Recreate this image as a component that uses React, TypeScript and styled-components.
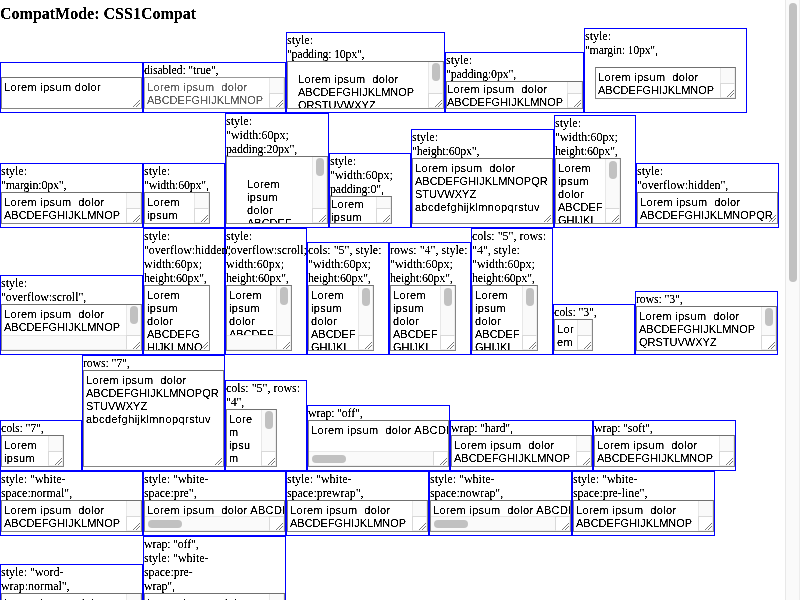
import React from 'react';
import styled, { createGlobalStyle, css } from 'styled-components';

const Global = createGlobalStyle`
  html, body { margin: 0; padding: 0; background: #fff; overflow: hidden; }
  * { box-sizing: border-box; }
`;

const Window = styled.div`
  display: flex;
  width: 800px;
  height: 600px;
  overflow: hidden;
  background: #fff;
  color: #000;
`;

const Page = styled.main`
  flex: 1;
  min-width: 0;
  font: 12px/14px 'Liberation Serif', 'Times New Roman', serif;
`;

const Title = styled.h1`
  margin: 0;
  height: 28px;
  padding-top: 5px;
  font-size: 16px;
  line-height: 18px;
  font-weight: bold;
  white-space: pre;
  filter: url(#crisp);
`;

const Row = styled.div`
  display: flex;
  align-items: flex-end;
`;

const Cell = styled.section`
  flex: none;
  min-width: 82px;
  border: 1px solid #00f;
  padding-bottom: 3px;
`;

const Label = styled.div`
  width: 0;
  min-height: 14px;
  white-space: pre;
`;

const LabelLine = styled.div<{ $track: number }>`
  width: max-content;
  height: 14px;
  letter-spacing: ${(p) => p.$track}px;
  filter: url(#crisp);
`;

const Field = styled.div<{ $w: number; $h: number; $margin: number; $disabled: boolean }>`
  display: flex;
  flex-direction: column;
  position: relative;
  width: ${(p) => p.$w}px;
  height: ${(p) => p.$h}px;
  margin: ${(p) => p.$margin}px;
  border: 1px solid ${(p) => (p.$disabled ? '#aaa' : '#858585')};
  border-top-color: ${(p) => (p.$disabled ? '#999' : '#707070')};
  background: #fff;
  color: ${(p) => (p.$disabled ? '#606060' : '#000')};
  overflow: hidden;
`;

const Upper = styled.div`
  display: flex;
  flex: 1;
  min-height: 0;
`;

const Lower = styled.div`
  display: flex;
  flex: none;
  height: 15px;
`;

const Content = styled.div<{ $pad: number }>`
  flex: 1;
  min-width: 0;
  padding: ${(p) => p.$pad + 1}px ${(p) => p.$pad}px 0;
  font: 11px/13px 'Liberation Sans', Arial, sans-serif;
  white-space: pre;
  overflow: hidden;
`;

const ContentLine = styled.div<{ $track: number }>`
  width: max-content;
  height: 13px;
  letter-spacing: ${(p) => p.$track}px;
  filter: url(#crisp);
`;

const SideBar = styled.div`
  display: flex;
  flex-direction: column;
  flex: none;
  width: 15px;
`;

const track = css`
  flex: 1;
  background: #fafafa;
`;

const VTrack = styled.div<{ $start: number }>`
  ${track}
  border-left: 1px solid #e8e8e8;
  border-right: 1px solid #ededed;
  padding: ${(p) => p.$start}px 0 0 3px;
`;

const HTrack = styled.div`
  ${track}
  border-top: 1px solid #e8e8e8;
  border-bottom: 1px solid #ededed;
  padding: 3px 0 0 3px;
`;

const Thumb = styled.div<{ $w: number; $h: number }>`
  width: ${(p) => p.$w}px;
  height: ${(p) => p.$h}px;
  border-radius: 4px;
  background: #c1c1c1;
`;

const Corner = styled.div`
  flex: none;
  width: 15px;
  height: 15px;
  border: 1px solid #d9d9d9;
  border-right-color: #f0f0f0;
  border-bottom-color: #f0f0f0;
  background: #fff;
`;

const Grip = styled.svg`
  position: absolute;
  right: 0;
  bottom: 0;
`;

const FilterDefs = styled.svg`
  position: absolute;
`;

type Bar = 'none' | 'v' | 'h' | 'both';

interface Spec {
  label: string[];
  text?: string[];
  w?: number;
  h?: number;
  pad?: number;
  margin?: number;
  bar?: Bar;
  thumb?: number;
  disabled?: boolean;
}

const LOREM = 'Lorem ipsum  dolor';
const WRAPPED = [LOREM, 'ABCDEFGHIJKLMNOP', 'QRSTUVWXYZ'];
const OPEN = [LOREM, 'ABCDEFGHIJKLMNOPQR', 'STUVWXYZ', 'abcdefghijklmnopqrstuv'];
const NARROW = ['Lorem', 'ipsum', 'dolor', 'ABCDEF', 'GHIJKL'];
const UNBROKEN = [LOREM + ' ABCDEFGHIJKLMNOP'];

const small = { w: 66, h: 66, text: NARROW, thumb: 2 };

const rows: Spec[][] = [
  [
    { label: [''], text: ['Lorem ipsum dolor'], bar: 'none' },
    { label: ['disabled: "true",'], disabled: true },
    { label: ['style:', '"padding: 10px",'], w: 157, h: 48, pad: 10, thumb: 1 },
    { label: ['style:', '"padding:0px",'], w: 137, h: 28, pad: 0 },
    { label: ['style:', '"margin: 10px",'], margin: 10 },
  ],
  [
    { label: ['style:', '"margin:0px",'] },
    { label: ['style:', '"width:60px",'], w: 66, text: NARROW.slice(0, 2) },
    { label: ['style:', '"width:60px;', 'padding:20px",'], w: 102, h: 68, pad: 20, text: NARROW, thumb: 1 },
    { label: ['style:', '"width:60px;', 'padding:0",'], w: 62, h: 28, pad: 0, text: NARROW.slice(0, 2) },
    { label: ['style:', '"height:60px",'], h: 66, text: OPEN, bar: 'none' },
    { label: ['style:', '"width:60px;', 'height:60px",'], ...small },
    { label: ['style:', '"overflow:hidden",'], text: OPEN.slice(0, 2), bar: 'none' },
  ],
  [
    { label: ['style:', '"overflow:scroll",'], h: 47, bar: 'both', thumb: 1, text: WRAPPED.slice(0, 2) },
    {
      label: ['style:', '"overflow:hidden;', 'width:60px;', 'height:60px",'],
      w: 66, h: 66, text: ['Lorem', 'ipsum', 'dolor', 'ABCDEFG', 'HIJKLMNO'], bar: 'none',
    },
    { label: ['style:', '"overflow:scroll;', 'width:60px;', 'height:60px",'], ...small, bar: 'both', thumb: 1 },
    { label: ['cols: "5", style:', '"width:60px;', 'height:60px",'], ...small },
    { label: ['rows: "4", style:', '"width:60px;', 'height:60px",'], ...small },
    { label: ['cols: "5", rows:', '"4", style:', '"width:60px;', 'height:60px",'], ...small },
    { label: ['cols: "3",'], w: 39, text: ['Lor', 'em'] },
    { label: ['rows: "3",'], h: 45, thumb: 1 },
  ],
  [
    { label: ['cols: "7",'], w: 63, text: NARROW.slice(0, 2) },
    { label: ['rows: "7",'], h: 97, text: OPEN, bar: 'none' },
    { label: ['cols: "5", rows:', '"4",'], w: 51, h: 58, text: ['Lore', 'm', 'ipsu', 'm'], thumb: 1 },
    { label: ['wrap: "off",'], h: 47, text: UNBROKEN, bar: 'h' },
    { label: ['wrap: "hard",'] },
    { label: ['wrap: "soft",'] },
  ],
  [
    { label: ['style: "white-', 'space:normal",'] },
    { label: ['style: "white-', 'space:pre",'], text: UNBROKEN, bar: 'h' },
    { label: ['style: "white-', 'space:prewrap",'] },
    { label: ['style: "white-', 'space:nowrap",'], text: UNBROKEN, bar: 'h' },
    { label: ['style: "white-', 'space:pre-line",'] },
  ],
  [
    { label: ['style: "word-', 'wrap:normal",'] },
    { label: ['wrap: "off",', 'style: "white-', 'space:pre-', 'wrap",'] },
  ],
];

const contentTracking = (line: string) => {
  if (/^[A-Z]{2}/.test(line)) return 0;
  return line.startsWith('abc') ? 0.43 : 0.35;
};

const labelTracking = (line: string) => {
  if (line.includes(': 10px')) return -0.28;
  if (/^(space|wrap:n|"overflow)/.test(line)) return -0.05;
  return line.endsWith('",') ? -0.2 : 0;
};

function TextArea({
  text, w = 141, h = 32, pad = 2, margin = 0, bar = 'v', thumb, disabled = false,
}: Spec) {
  const lines = text ?? (h > 32 ? WRAPPED : WRAPPED.slice(0, 2));
  return (
    <Field $w={w} $h={h} $margin={margin} $disabled={disabled}>
      <Upper>
        <Content $pad={pad}>
          {lines.map((line, i) => (
            <ContentLine key={i} $track={contentTracking(line)}>{line}</ContentLine>
          ))}
        </Content>
        {(bar === 'v' || bar === 'both') && (
          <SideBar>
            <VTrack $start={thumb ?? 0}>{thumb !== undefined && <Thumb $w={8} $h={18} />}</VTrack>
            {bar === 'v' && <Corner />}
          </SideBar>
        )}
      </Upper>
      {(bar === 'h' || bar === 'both') && (
        <Lower>
          <HTrack>{bar === 'h' && <Thumb $w={34} $h={8} />}</HTrack>
          <Corner />
        </Lower>
      )}
      <Grip width="10" height="10" viewBox="0 0 10 10">
        <path d="M2 9L9 2M5 9L9 5" stroke="#555" strokeWidth="0.8" fill="none" />
      </Grip>
    </Field>
  );
}

export default function App() {
  return (
    <Window>
      <Global />
      <FilterDefs width="0" height="0" aria-hidden="true">
        <filter id="crisp" x="0" y="0" width="1" height="1" colorInterpolationFilters="sRGB">
          <feComponentTransfer>
            <feFuncA type="linear" slope="3" intercept="-0.75" />
          </feComponentTransfer>
        </filter>
      </FilterDefs>
      <Page>
        <Title>CompatMode: CSS1Compat</Title>
        {rows.map((row, r) => (
          <Row key={r}>
            {row.map((spec, c) => (
              <Cell key={c}>
                <Label>
                  {spec.label.map((line, i) => (
                    <LabelLine key={i} $track={labelTracking(line)}>{line}</LabelLine>
                  ))}
                </Label>
                <TextArea {...spec} />
              </Cell>
            ))}
          </Row>
        ))}
      </Page>
      <SideBar>
        <VTrack $start={3}><Thumb $w={8} $h={279} /></VTrack>
      </SideBar>
    </Window>
  );
}
